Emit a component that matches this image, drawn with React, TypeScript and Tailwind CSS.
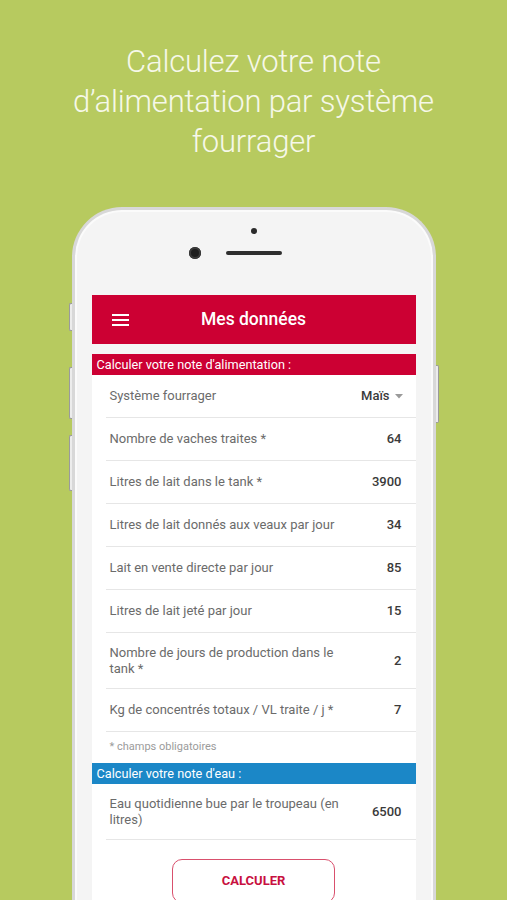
import React from "react";

type Row = { label: React.ReactNode; value: string; tall?: boolean; select?: boolean };

const feedRows: Row[] = [
  { label: "Système fourrager", value: "Maïs", select: true },
  { label: "Nombre de vaches traites *", value: "64" },
  { label: "Litres de lait dans le tank *", value: "3900" },
  { label: "Litres de lait donnés aux veaux par jour", value: "34" },
  { label: "Lait en vente directe par jour", value: "85" },
  { label: "Litres de lait jeté par jour", value: "15" },
  { label: "Nombre de jours de production dans le tank *", value: "2", tall: true },
  { label: "Kg de concentrés totaux / VL traite / j *", value: "7" },
];

const DataRow: React.FC<{ row: Row }> = ({ row }) => (
  <div
    className={
      row.tall
        ? "flex items-center justify-between border-b border-[#e6e6e6] pt-[12px] pb-[11px] pl-[4px] pr-[14px]"
        : "flex h-[43px] items-center justify-between border-b border-[#e6e6e6] pl-[4px] pr-[14px]"
    }
  >
    <span className="max-w-[232px] text-[13px] leading-[16px] text-[#6b6b6b]">{row.label}</span>
    {row.select ? (
      <span className="mr-[-1px] flex items-center gap-[5px] text-[13px] font-medium text-[#3a3a3a]">
        Maïs
        <svg width="8" height="5" viewBox="0 0 8 5">
          <path d="M0 0h8L4 4.5z" fill="#9a9a9a" />
        </svg>
      </span>
    ) : (
      <span className="text-[13px] font-medium text-[#3a3a3a]">{row.value}</span>
    )}
  </div>
);

const App: React.FC = () => {
  return (
    <div
      className="flex h-[900px] w-[507px] flex-col items-center overflow-hidden bg-[#b7ca5f]"
      style={{ fontFamily: "Roboto, 'Liberation Sans', sans-serif" }}
    >
      {/* Headline */}
      <h1 className="pt-[42px] text-center text-[31px] font-light leading-[40px] tracking-[-0.2px] text-[#f6f8e9]">
        Calculez votre note
        <br />
        d’alimentation par système
        <br />
        fourrager
      </h1>

      {/* Phone */}
      <div className="relative mt-[45px] h-[740px] w-[364px] shrink-0 rounded-t-[50px] border-[3px] border-b-0 border-[#d8d8d8] bg-[#f4f4f4] shadow-[inset_0_0_0_2px_#fbfbfb]">
        {/* side buttons */}
        <div className="absolute left-[-6px] top-[93px] h-[28px] w-[3px] rounded-l-[2px] border border-r-0 border-[#9a9a9a] bg-[#ececec]" />
        <div className="absolute left-[-6px] top-[157px] h-[52px] w-[3px] rounded-l-[2px] border border-r-0 border-[#9a9a9a] bg-[#ececec]" />
        <div className="absolute left-[-6px] top-[225px] h-[56px] w-[3px] rounded-l-[2px] border border-r-0 border-[#9a9a9a] bg-[#ececec]" />
        <div className="absolute right-[-6px] top-[155px] h-[58px] w-[3px] rounded-r-[2px] border border-l-0 border-[#9a9a9a] bg-[#ececec]" />

        {/* earpiece area */}
        <div className="flex h-[85px] flex-col items-center">
          <div className="mt-[18px] h-[6px] w-[6px] rounded-full bg-[#2a2a2a]" />
          <div className="mt-[13px] flex items-center gap-[25px]">
            <div className="h-[12px] w-[12px] rounded-full bg-[#1e1e1e] shadow-[inset_0_0_0_2px_#3a3a3a]" />
            <div className="h-[4px] w-[56px] rounded-full bg-[#2e2e2e]" />
            <div className="h-[12px] w-[12px]" />
          </div>
        </div>

        {/* Screen */}
        <div className="mx-[17px] flex flex-col bg-[#f5f5f5]">
          <div className="relative flex h-[49px] items-center justify-center bg-[#cc0033]">
            <div className="absolute left-[20px] flex flex-col gap-[3px]">
              <span className="block h-[2px] w-[17px] bg-white" />
              <span className="block h-[2px] w-[17px] bg-white" />
              <span className="block h-[2px] w-[17px] bg-white" />
            </div>
            <span className="text-[17.5px] font-medium text-white">Mes données</span>
          </div>

          <div className="mt-[10px] flex flex-col bg-white">
            <div className="flex h-[21px] items-center bg-[#cc0033] pl-[5px] text-[12.7px] text-white">
              Calculer votre note d'alimentation :
            </div>
            <div className="ml-[14px] flex flex-col">
              {feedRows.map((row, i) => (
                <DataRow key={i} row={row} />
              ))}
            </div>
            <div className="flex h-[31px] items-center pl-[18px] text-[11px] text-[#9b9b9b]">
              * champs obligatoires
            </div>

            <div className="flex h-[21px] items-center bg-[#1b87c7] pl-[5px] text-[12.7px] text-white">
              Calculer votre note d'eau :
            </div>
            <div className="ml-[14px] flex flex-col">
              <DataRow row={{ label: "Eau quotidienne bue par le troupeau (en litres)", value: "6500", tall: true }} />
            </div>

            <div className="flex justify-center pt-[19px] pb-[40px]">
              <button className="h-[44px] w-[163px] rounded-[10px] border-[1.5px] border-[#d9506d] bg-white text-[13px] font-bold text-[#c81040]">
                CALCULER
              </button>
            </div>
          </div>
        </div>
      </div>
    </div>
  );
};

export default App;
